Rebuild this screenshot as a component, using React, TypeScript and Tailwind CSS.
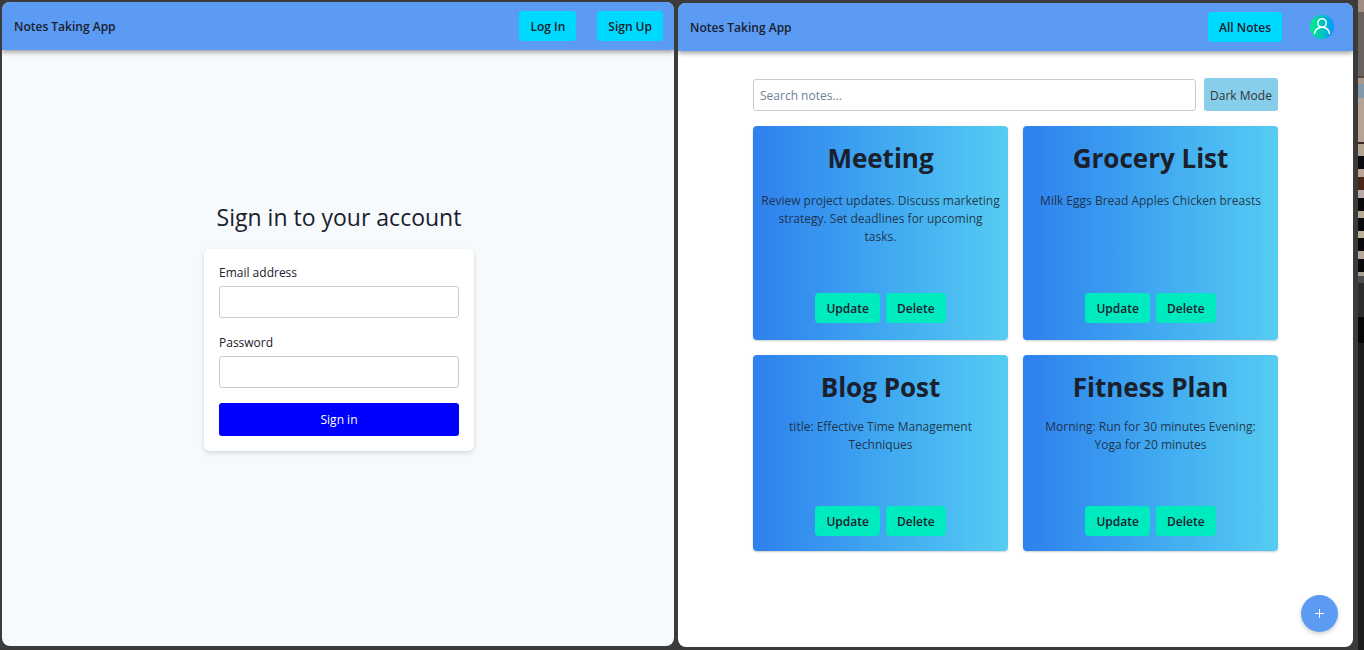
import type { ReactNode } from "react";

const notes = [
  { title: "Meeting", body: "Review project updates. Discuss marketing\nstrategy. Set deadlines for upcoming\ntasks.", tall: true },
  { title: "Grocery List", body: "Milk Eggs Bread Apples Chicken breasts", tall: true },
  { title: "Blog Post", body: "title: Effective Time Management\nTechniques", tall: false },
  { title: "Fitness Plan", body: "Morning: Run for 30 minutes Evening:\nYoga for 20 minutes", tall: false },
];

const scenery: [number, number, string][] = [
  [0, 12, "#a08c80"],
  [12, 64, "#6b625f"],
  [76, 2, "#5a4a3f"],
  [78, 6, "#a8988c"],
  [84, 14, "#8199aa"],
  [98, 44, "#b5a496"],
  [142, 2, "#3a2723"],
  [144, 12, "#b3a391"],
  [156, 13, "#0c0a10"],
  [169, 8, "#b8a595"],
  [177, 13, "#4a2414"],
  [190, 8, "#b9a8a8"],
  [198, 13, "#0b080c"],
  [211, 7, "#b8ab92"],
  [218, 13, "#0a090c"],
  [231, 7, "#b9b096"],
  [238, 13, "#09070c"],
  [251, 8, "#b8a89a"],
  [259, 13, "#09080b"],
  [272, 4, "#a99f90"],
  [276, 7, "#4b4d4f"],
  [283, 34, "#2a2c2e"],
  [317, 26, "#060606"],
  [343, 307, "#1c1d1f"],
];

function Window({ children, className }: { children: ReactNode; className: string }) {
  return <section className={`flex min-w-0 flex-col overflow-hidden rounded-lg ${className}`}>{children}</section>;
}

function NavBar({ children }: { children: ReactNode }) {
  return (
    <header className="relative flex h-12 shrink-0 items-center justify-between bg-[#5b9bf3] pl-3 shadow-[0_2px_5px_rgba(0,0,0,0.4)]">
      <span className="pt-[2px] text-[12px] font-semibold">Notes Taking App</span>
      {children}
    </header>
  );
}

function NavLink({ children }: { children: ReactNode }) {
  return (
    <a href="#" className="flex h-[30px] items-center rounded bg-[#00d9ff] px-[11px] pt-[2px] text-[12px] font-semibold">
      {children}
    </a>
  );
}

function Field({ id, label, type }: { id: string; label: string; type: string }) {
  return (
    <div className="flex flex-col">
      <label htmlFor={id} className="mb-1 text-[12px] leading-[18px]">
        {label}
      </label>
      <input id={id} type={type} className="h-8 w-full rounded-[3px] border border-[#cbcbcb] bg-white px-2 text-[12px]" />
    </div>
  );
}

function NoteButton({ children }: { children: ReactNode }) {
  return <button className="h-[30px] rounded bg-[#00eac0] px-[11px] pt-[2px] text-[12px] font-semibold">{children}</button>;
}

export default function App() {
  return (
    <div className="flex min-h-screen bg-[#3b3b3c] font-['Open_Sans','Noto_Sans',sans-serif] text-[#1a202c]">
      <main className="grid grow grid-cols-[672fr_675fr] gap-1 pr-[5px] pl-[2px]">
        <Window className="mt-[2px] mb-1 bg-[#f7fafc]">
          <NavBar>
            <nav className="flex gap-[21px] pr-[11px]">
              <NavLink>Log In</NavLink>
              <NavLink>Sign Up</NavLink>
            </nav>
          </NavBar>
          <div className="flex grow flex-col items-center justify-center pb-11 pl-[2px]">
            <h1 className="mb-4 text-[23px] leading-[32px]">Sign in to your account</h1>
            <form className="flex w-[270px] flex-col gap-[15px] rounded-md bg-white p-[15px] shadow-[0_2px_5px_rgba(0,0,0,0.14)]">
              <div className="flex flex-col gap-4">
                <Field id="email" label="Email address" type="email" />
                <Field id="password" label="Password" type="password" />
              </div>
              <button type="button" className="h-[33px] rounded-[3px] bg-[#0000ff] text-[12px] text-white">
                Sign in
              </button>
            </form>
          </div>
        </Window>

        <Window className="relative mt-[3px] mb-[3px] bg-white">
          <NavBar>
            <nav className="flex items-center gap-7 pr-[19px]">
              <NavLink>All Notes</NavLink>
              <a href="#" aria-label="Profile">
                <svg viewBox="0 0 24 24" className="size-6">
                  <defs>
                    <linearGradient id="avatar">
                      <stop stopColor="#00f080" />
                      <stop offset="1" stopColor="#0098ff" />
                    </linearGradient>
                  </defs>
                  <circle cx="12" cy="12" r="12" fill="url(#avatar)" />
                  <circle cx="12" cy="8" r="4.2" fill="none" stroke="#fff" strokeWidth="1.5" />
                  <path d="M4.5 19c0-4 3.3-6.8 7.5-6.8s7.5 2.8 7.5 6.8" fill="none" stroke="#fff" strokeWidth="1.5" />
                </svg>
              </a>
            </nav>
          </NavBar>
          <div className="mx-[75px] mt-[27px] flex flex-col gap-[15px]">
            <div className="flex items-center gap-2">
              <input
                aria-label="Search notes"
                placeholder="Search notes..."
                className="h-8 min-w-0 grow rounded-[3px] border border-[#cbcbcb] px-[6px] pt-[2px] text-[12px] placeholder:text-[#718096]"
              />
              <button className="h-[33px] w-[74px] shrink-0 rounded-[3px] bg-[#87ceeb] pt-[2px] text-[12px] text-[#333]">
                Dark Mode
              </button>
            </div>
            <div className="grid grid-cols-2 gap-[15px]">
              {notes.map((note) => (
                <article
                  key={note.title}
                  className={`flex flex-col items-center rounded bg-linear-to-r from-[#2f80ed] to-[#56ccf2] px-2 pt-[15px] text-center shadow-[0_1px_2px_rgba(0,0,0,0.2)] ${
                    note.tall ? "h-[214px] pb-[17px]" : "h-[196px] pb-[15px]"
                  }`}
                >
                  <h2 className="text-[26px] leading-[34px] font-bold">{note.title}</h2>
                  <p className={`whitespace-pre-line text-[12px] leading-[18px] text-[#1a202c]/85 ${note.tall ? "mt-[17px]" : "mt-[14px]"}`}>
                    {note.body}
                  </p>
                  <div className="mt-auto flex gap-[6px]">
                    <NoteButton>Update</NoteButton>
                    <NoteButton>Delete</NoteButton>
                  </div>
                </article>
              ))}
            </div>
          </div>
          <button
            aria-label="Add note"
            className="absolute right-[15px] bottom-[15px] flex size-[37px] items-center justify-center rounded-full bg-[#5b9bf3] text-white shadow-[0_2px_4px_rgba(0,0,0,0.2)]"
          >
            <svg viewBox="0 0 9 9" className="size-[9px]" stroke="currentColor">
              <path d="M4.5 0v9M0 4.5h9" />
            </svg>
          </button>
        </Window>
      </main>
      <svg viewBox="0 0 6 650" preserveAspectRatio="none" className="h-screen w-[6px] shrink-0" aria-hidden="true">
        {scenery.map(([y, height, fill]) => (
          <rect key={y} y={y} width="6" height={height} fill={fill} />
        ))}
      </svg>
    </div>
  );
}
